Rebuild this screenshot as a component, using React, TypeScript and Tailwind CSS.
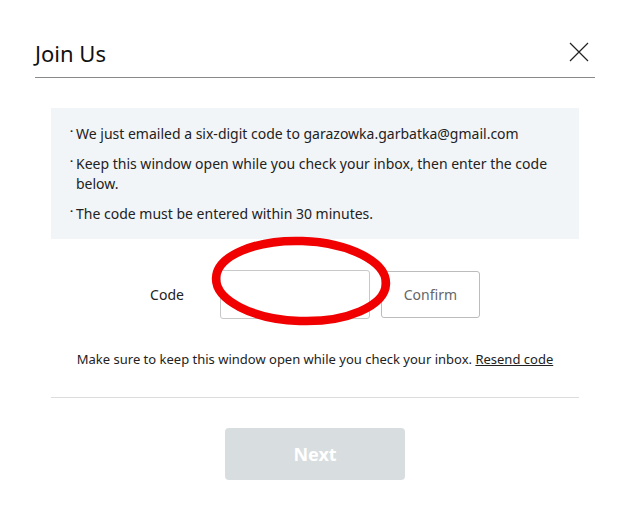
import React from "react";

const font = { fontFamily: '"Noto Sans", "Open Sans", sans-serif' };

const Bullet = ({ children }: { children: React.ReactNode }) => (
  <li className="flex items-start">
    <span className="w-[6px] shrink-0 text-[11px] leading-[13px] font-bold">·</span>
    <span>{children}</span>
  </li>
);

export default function App() {
  return (
    <div className="w-[630px] h-[514px] bg-white text-[#222]" style={font}>
      <div className="px-[35px] pt-[33px]">
        {/* Header */}
        <div className="flex items-center justify-between h-[45px] border-b border-[#8a8a8a]">
          <h1 className="text-[22px] font-normal text-[#111] pb-[3px]">Join Us</h1>
          <svg width="20" height="20" viewBox="0 0 20 20" className="mr-[6px] mb-[6px]">
            <path d="M1 1 L19 19 M19 1 L1 19" stroke="#222" strokeWidth="1.2" />
          </svg>
        </div>

        <div className="px-[16px]">
          {/* Info box */}
          <ul className="mt-[30px] bg-[#f2f5f8] pl-[19px] pr-4 pt-[16px] pb-[15px] text-[14px] leading-[20px] space-y-[10px]">
            <Bullet>We just emailed a six-digit code to garazowka.garbatka@gmail.com</Bullet>
            <Bullet>
              Keep this window open while you check your inbox, then enter the code below.
            </Bullet>
            <Bullet>The code must be entered within 30 minutes.</Bullet>
          </ul>

          {/* Code row */}
          <div className="relative mt-[31px] flex items-center justify-center">
            <span className="text-[14px] mr-[36px]">Code</span>
            <input
              className="w-[150px] h-[49px] border border-[#c8c8c8] rounded-[3px] outline-none px-2"
              type="text"
            />
            <button className="ml-[11px] w-[99px] h-[47px] border border-[#bcbcbc] rounded-[3px] text-[14px] text-[#666] bg-white">
              Confirm
            </button>
            <svg
              className="absolute left-[158px] top-[-34px] pointer-events-none"
              width="184"
              height="96"
              viewBox="0 0 184 96"
            >
              <ellipse
                cx="92"
                cy="45"
                rx="85"
                ry="40"
                fill="none"
                stroke="#f00000"
                strokeWidth="8.5"
                transform="rotate(2 92 45)"
              />
            </svg>
          </div>

          {/* Helper */}
          <p className="mt-[30px] text-center text-[13px] leading-[20px]">
            Make sure to keep this window open while you check your inbox.{" "}
            <a href="#" className="underline">
              Resend code
            </a>
          </p>

          <div className="mt-[28px] border-t border-[#dcdcdc]" />

          <div className="flex justify-center mt-[30px]">
            <button className="w-[180px] h-[52px] rounded-[4px] bg-[#d8dde0] text-white text-[18px] font-bold">
              Next
            </button>
          </div>
        </div>
      </div>
    </div>
  );
}
